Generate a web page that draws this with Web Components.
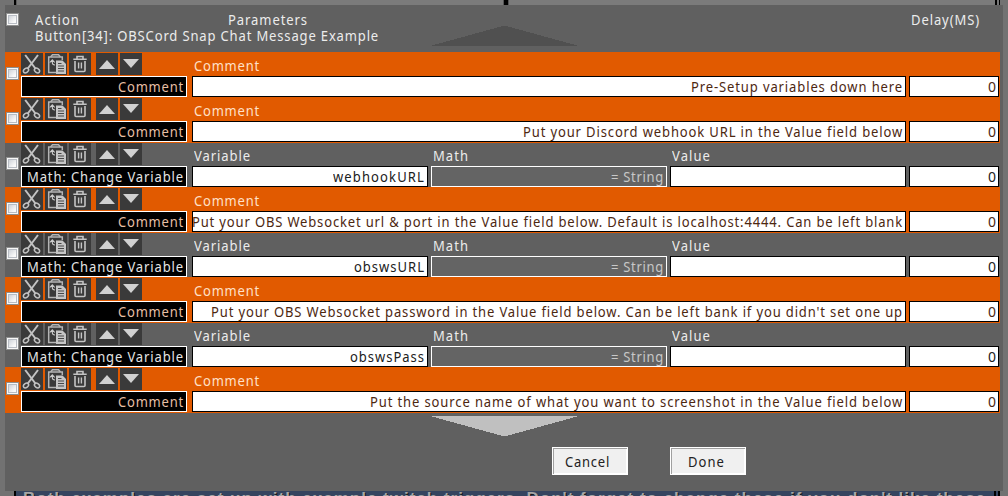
<!DOCTYPE html>
<html lang="en"><head><meta charset="utf-8"><title>OBSCord</title>
<style>html,body{margin:0;height:100%;overflow:hidden;background:#727272}</style></head><body>
<macro-editor></macro-editor>
<script>
// A single line of text, slightly condensed and tracked to a fixed width.
class FitText extends HTMLElement{
  connectedCallback(){
    this.attachShadow({mode:'open'}).innerHTML='<style>:host{display:inline-block;white-space:pre;line-height:inherit}span{display:inline-block;transform-origin:0 0}</style><span><slot></slot></span>';
    const s=this.shadowRoot.querySelector('span'),w=+this.getAttribute('w'),k=+(this.getAttribute('k')||.93);
    const n=this.textContent.length,d=(w/k-s.getBoundingClientRect().width)/n;
    s.style.letterSpacing=d.toFixed(3)+'px';
    s.style.width=w/k+'px';
    s.style.marginRight=(w-w/k)+'px';
    s.style.transform='scaleX('+k+')';
  }
}
class CheckBox extends HTMLElement{
  connectedCallback(){this.attachShadow({mode:'open'}).innerHTML='<style>:host{display:block;width:13px;height:13px;box-sizing:border-box;border:1px solid #8e8f8f;background:#f8f8f8;padding:1px}i{display:block;box-sizing:border-box;width:9px;height:9px;border:1px solid #b9bdc4;background:linear-gradient(135deg,#cfd3d9,#fafafa 80%)}</style><i></i>';}
}
const icons={
cut:'<g fill="none" stroke="#c2c2c2"><path d="M4.200 2 14.800 16M17 2 6.400 16" stroke-width="2"/><ellipse cx="5" cy="17.500" rx="2.900" ry="2" transform="rotate(-38 5 17.500)" stroke-width="1.400"/><ellipse cx="16" cy="17.500" rx="2.900" ry="2" transform="rotate(38 16 17.500)" stroke-width="1.400"/></g>',
copy:'<path d="M11 19.500H3.700V4H5.500L7.500 1.700H13.500L15.500 4H17.300V7" fill="none" stroke="#b5b5b5" stroke-width="1.500"/><path d="M6 4H15" stroke="#b5b5b5" stroke-width="1.500"/><path d="M4.800 9.500 7.300 6.800 9.800 9.500M7.300 7V9.500Q7.300 12 10 12" fill="none" stroke="#ccc" stroke-width="1.100"/><path d="M11 7.500h6.500l3.500 3.500v10H11z" fill="#c6c6c6"/><path d="M13 10.500h3.500M13 13h6M13 15.500h6M13 18h6" stroke="#484848"/>',
trash:'<g fill="none" stroke="#c4c4c4" stroke-width="1.600"><path d="M4.300 6.300H17.700M8 6V3.500H14V6M6 8V17.500Q6 18.500 7 18.500H15Q16 18.500 16 17.500V8"/><path d="M9.600 9.500V15.500M12.400 9.500V15.500" stroke-width="1.400"/></g>',
up:'<path d="M11 7 19 16H3z" fill="#d0d0d0"/>',
down:'<path d="M3 6H19L11 15z" fill="#d0d0d0"/>'};
class ToolIcon extends HTMLElement{
  connectedCallback(){this.attachShadow({mode:'open'}).innerHTML='<style>:host{display:block;width:22px;height:22px;background:#3a3a3a}svg{display:block}</style><svg width="22" height="22" viewBox="0 0 22 22">'+icons[this.getAttribute('name')]+'</svg>';}
}
class FieldBox extends HTMLElement{
  connectedCallback(){this.attachShadow({mode:'open'}).innerHTML='<style>:host{display:flex;justify-content:flex-end;box-sizing:border-box;height:21px;border:1px solid #000;background:#fff;color:#1a1a1a;padding:1px 2px 0 0}:host([kind=dark]){background:#000;border-color:#fff;color:#e4e4e4}:host([kind=math]){background:#646464;border-color:#fff;color:#c8c8c8}</style><slot></slot>';}
}
class ActionRow extends HTMLElement{
  connectedCallback(){
    const c=this.getAttribute('kind')==='comment',v=this.getAttribute('value').replace('&','&amp;'),w=this.getAttribute('w');
    this.attachShadow({mode:'open'}).innerHTML=`<style>
:host{display:grid;grid-template-columns:16px 166px 714px 90px;height:45px;width:995px;--in:#202020;--nm:#e4e4e4;--lb:#ececec}
:host([kind=comment]){background:#e15a00;box-shadow:0 1px #e15a00;--in:#4d2710;--nm:#e6bfa4;--lb:#ffe0c8}
check-box{margin:15px 0 0 1px}
.tools{display:flex;gap:2px;padding-top:1px;height:23px;box-sizing:border-box}
.tools tool-icon:nth-child(4){margin-left:3px}
.name{color:var(--nm);margin-top:1px}
.m{margin-left:5px;display:grid;grid-template-columns:${c?'714px':'236px 236px 236px'};column-gap:3px;align-content:start}
.h{height:24px;color:var(--lb);padding:5px 0 0 2px;box-sizing:border-box}
field-box{color:var(--in)}
field-box.mt{color:#c8c8c8}
.d{margin:24px 0 0 8px;width:90px}
</style><check-box></check-box><div><div class="tools"><tool-icon name="cut"></tool-icon><tool-icon name="copy"></tool-icon><tool-icon name="trash"></tool-icon><tool-icon name="up"></tool-icon><tool-icon name="down"></tool-icon></div><field-box kind="dark" class="name"><fit-text w="${c?66:157}">${c?'Comment':'Math: Change Variable'}</fit-text></field-box></div>
<div class="m">${c?`<div class="h"><fit-text w="66">Comment</fit-text></div><field-box><fit-text w="${w}">${v}</fit-text></field-box>`:`<div class="h"><fit-text w="57">Variable</fit-text></div><div class="h"><fit-text w="36">Math</fit-text></div><div class="h"><fit-text w="39">Value</fit-text></div><field-box><fit-text w="${w}">${v}</fit-text></field-box><field-box kind="math" class="mt"><fit-text w="53">= String</fit-text></field-box><field-box></field-box>`}</div><field-box class="d"><fit-text w="8" k="1">0</fit-text></field-box>`;
  }
}
class PushButton extends HTMLElement{
  connectedCallback(){this.attachShadow({mode:'open'}).innerHTML='<style>:host{display:block;box-sizing:border-box;width:76px;height:28px;border:1px solid #fff;background:#f0f0f0;box-shadow:inset 1px 1px #a0a0a0,inset -1px -1px #fff;color:#222;padding:5px 0 0 12px}</style><slot></slot>';}
}
class MacroEditor extends HTMLElement{
  connectedCallback(){this.attachShadow({mode:'open'}).innerHTML=`<style>
:host{display:grid;grid-template-rows:5px 486px 5px;width:1008px;height:496px;font:14px/18px "Noto Sans","Open Sans",sans-serif;overflow:hidden}
.top{background:linear-gradient(90deg,#727272 14px,#000 14px 16px,#5b5b5b 16px 17px,#7b7b7b 17px 503px,#555 503px 504px,#000 504px 508px,#555 508px 509px,#7b7b7b 509px 995px,#000 995px 997px,#777 997px 999px,#000 999px 1000px,#727272 1000px)}
.panel{margin-left:5px;width:998px;background:#606060;display:grid;grid-template-rows:47px 360px 36px 43px}
header{display:grid;grid-template-columns:30px 193px 683px 92px;grid-template-rows:16px 16px;line-height:16px;padding-top:7px;color:#ececec;position:relative}
header check-box{margin:1px 0 0 1px}
header .sub{grid-column:2/4}
svg{display:block}
.upper{position:absolute;left:426px;top:21px}
.lower{padding:4px 0 0 426px}
.btns{display:flex;gap:42px;padding-left:547px;margin-top:-1px}
push-button:last-child{padding-left:17px}
.foot{background:linear-gradient(90deg,#727272 14px,#000 14px 16px,#35445f 16px 994px,#000 994px 996px,#35445f 996px 998px,#000 998px 1000px,#727272 1000px);overflow:hidden;padding-left:23px;font:bold 17px/16px "Liberation Sans",Arial,sans-serif;color:#a6a6a6;text-shadow:1px 1px #111;height:5px}
.foot fit-text{margin-top:-2px}
</style><div class="top"></div><div class="panel"><header><check-box></check-box><fit-text w="45">Action</fit-text><fit-text w="80">Parameters</fit-text><fit-text w="69">Delay(MS)</fit-text><span></span><fit-text class="sub" w="344">Button[34]: OBSCord Snap Chat Message Example</fit-text>
<svg class="upper" width="147" height="20"><path d="M73.500 -.5 149 20.300H-2z" fill="#505050" shape-rendering="crispEdges"/></svg></header>
<main>
<action-row kind="comment" value="Pre-Setup variables down here" w="212"></action-row>
<action-row kind="comment" value="Put your Discord webhook URL in the Value field below" w="380"></action-row>
<action-row kind="math" value="webhookURL" w="92"></action-row>
<action-row kind="comment" value="Put your OBS Websocket url &amp; port in the Value field below. Default is localhost:4444. Can be left blank" w="711"></action-row>
<action-row kind="math" value="obswsURL" w="71"></action-row>
<action-row kind="comment" value="Put your OBS Websocket password in the Value field below. Can be left bank if you didn't set one up" w="692"></action-row>
<action-row kind="math" value="obswsPass" w="75"></action-row>
<action-row kind="comment" value="Put the source name of what you want to screenshot in the Value field below" w="533"></action-row>
</main><div class="lower"><svg width="147" height="20"><path d="M-2 -.3H149L73.500 20.500z" fill="#c0c0c0" shape-rendering="crispEdges"/></svg></div>
<div class="btns"><push-button><fit-text w="45">Cancel</fit-text></push-button><push-button><fit-text w="37">Done</fit-text></push-button></div></div>
<div class="foot"><fit-text w="963" k="1">Both examples are set up with example twitch triggers. Don't forget to change these if you don't like these</fit-text></div>`;}
}
customElements.define('fit-text',FitText);
customElements.define('check-box',CheckBox);
customElements.define('tool-icon',ToolIcon);
customElements.define('field-box',FieldBox);
customElements.define('action-row',ActionRow);
customElements.define('push-button',PushButton);
customElements.define('macro-editor',MacroEditor);
</script></body></html>
